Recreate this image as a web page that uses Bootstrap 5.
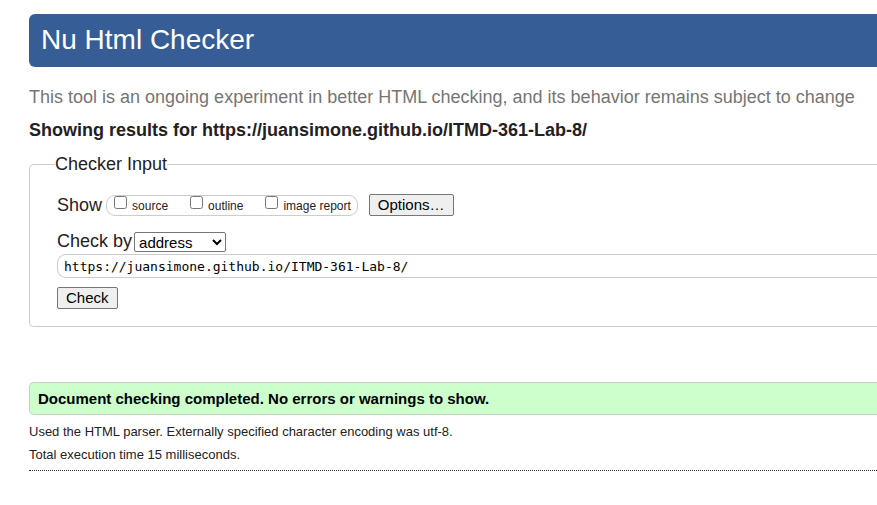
<!DOCTYPE html>
<html lang="en">
<head>
<meta charset="utf-8">
<meta name="viewport" content="width=device-width, initial-scale=1">
<title>Nu Html Checker</title>
<link rel="stylesheet" href="https://cdn.jsdelivr.net/npm/bootstrap@5.3.0/dist/css/bootstrap.min.css">
<style>
body { font: 18px/24px "Liberation Sans", Arial, sans-serif; color: #1f2126; padding: 14px 0 16px 29px; }
.banner { background: #365d95; border-radius: 6px 0 0 6px; padding: 9px 12px 10px; }
.banner h1 { font-size: 28px; line-height: 34px; }
.tagline { color: #757575; margin-top: 18px; }
.results-title { font-size: 18px; line-height: 24px; margin-top: 9px; }
.thin-line { border: 1px solid #ccc; border-right: 0; }
.checker { border-radius: 5px 0 0 5px; padding: 0 0 17px 27px; margin-top: 10px; }
.checker legend { font-size: 18px; line-height: 24px; margin-left: -2px; margin-bottom: 17px; }
.show-set { border: 1px solid #ccc; border-radius: 9px; height: 21px; margin: 0 11px 0 4px; padding: 0 6px 0 7px; gap: 22px; font-size: 12px; line-height: 20px; }
.show-set input { width: 13px; height: 13px; margin: 0 5px 0 0; }
.show-set label { line-height: 20px; }
.native { font-size: 15px; line-height: 18px; color: #000; border: 1px solid #767676; border-radius: 2px; }
button.native { background: #efefef; height: 22px; padding: 1px 8px; }
select.native { background: #fff; width: 92px; height: 20px; margin: 2px 0 0 2px; line-height: 16px; }
.address { font: 13px/18px "DejaVu Sans Mono", monospace; color: #000; border-radius: 9px 0 0 9px; height: 24px; padding: 0 7px 0 6px; margin: 1px 0 9px; }
.success { background: #cfc; color: #000; font-size: 15px; line-height: 19px; border-radius: 5px 0 0 5px; padding: 6px 8px; margin-top: 55px; }
.details { font-size: 13px; line-height: 23px; padding: 5px 0 4px; border-bottom: 1px dotted #333; }
</style>
<script defer src="https://cdn.jsdelivr.net/npm/bootstrap@5.3.0/dist/js/bootstrap.bundle.min.js"></script>
</head>
<body>
<header>
  <div class="banner text-white"><h1 class="fw-normal m-0">Nu Html Checker</h1></div>
  <p class="tagline mb-0">This tool is an ongoing experiment in better HTML checking, and its behavior remains subject to change</p>
</header>
<main>
  <h2 class="results-title fw-bold mb-0">Showing results for https://juansimone.github.io/ITMD-361-Lab-8/</h2>
  <form>
    <fieldset class="checker thin-line">
      <legend class="w-auto float-none p-0">Checker Input</legend>
      <div class="d-flex align-items-center">
        <span>Show</span>
        <div class="show-set d-flex">
          <div class="d-flex align-items-start"><input type="checkbox" id="source"><label for="source">source</label></div>
          <div class="d-flex align-items-start"><input type="checkbox" id="outline"><label for="outline">outline</label></div>
          <div class="d-flex align-items-start"><input type="checkbox" id="report"><label for="report">image report</label></div>
        </div>
        <button type="button" class="native">Options…</button>
      </div>
      <div class="d-flex align-items-center mt-2 pt-1">
        <label for="method">Check by</label>
        <select id="method" class="native"><option>address</option><option>file upload</option><option>text input</option></select>
      </div>
      <input type="url" class="address thin-line d-block w-100" aria-label="Address" value="https://juansimone.github.io/ITMD-361-Lab-8/">
      <button type="submit" class="native d-block">Check</button>
    </fieldset>
  </form>
  <p class="success thin-line fw-bold mb-0">Document checking completed. No errors or warnings to show.</p>
  <div class="details">
    <p class="m-0">Used the HTML parser. Externally specified character encoding was utf-8.</p>
    <p class="m-0">Total execution time 15 milliseconds.</p>
  </div>
</main>
</body>
</html>
